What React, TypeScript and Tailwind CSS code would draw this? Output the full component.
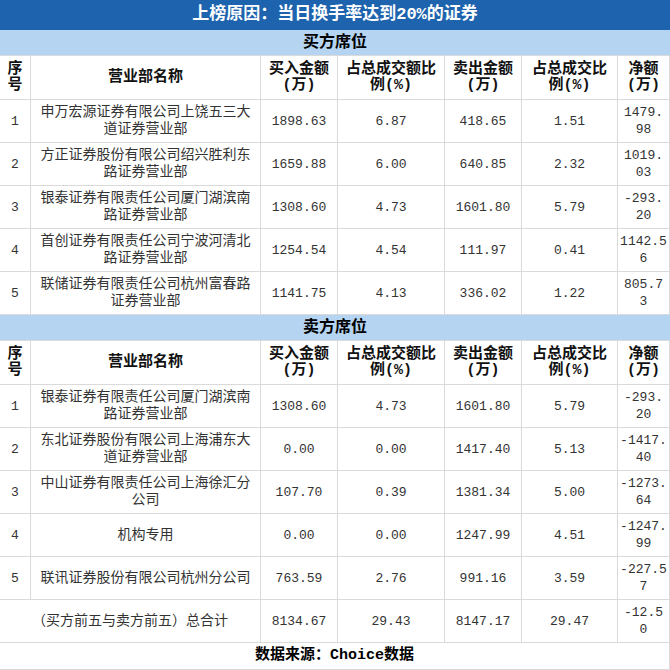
import React from 'react';

type Row = {
  no: string;
  name: string[];
  buy: string;
  buyPct: string;
  sell: string;
  sellPct: string;
  net: string[];
};

const buyRows: Row[] = [
  { no: '1', name: ['申万宏源证券有限公司上饶五三大', '道证券营业部'], buy: '1898.63', buyPct: '6.87', sell: '418.65', sellPct: '1.51', net: ['1479.', '98'] },
  { no: '2', name: ['方正证券股份有限公司绍兴胜利东', '路证券营业部'], buy: '1659.88', buyPct: '6.00', sell: '640.85', sellPct: '2.32', net: ['1019.', '03'] },
  { no: '3', name: ['银泰证券有限责任公司厦门湖滨南', '路证券营业部'], buy: '1308.60', buyPct: '4.73', sell: '1601.80', sellPct: '5.79', net: ['-293.', '20'] },
  { no: '4', name: ['首创证券有限责任公司宁波河清北', '路证券营业部'], buy: '1254.54', buyPct: '4.54', sell: '111.97', sellPct: '0.41', net: ['1142.5', '6'] },
  { no: '5', name: ['联储证券有限责任公司杭州富春路', '证券营业部'], buy: '1141.75', buyPct: '4.13', sell: '336.02', sellPct: '1.22', net: ['805.7', '3'] },
];

const sellRows: Row[] = [
  { no: '1', name: ['银泰证券有限责任公司厦门湖滨南', '路证券营业部'], buy: '1308.60', buyPct: '4.73', sell: '1601.80', sellPct: '5.79', net: ['-293.', '20'] },
  { no: '2', name: ['东北证券股份有限公司上海浦东大', '道证券营业部'], buy: '0.00', buyPct: '0.00', sell: '1417.40', sellPct: '5.13', net: ['-1417.', '40'] },
  { no: '3', name: ['中山证券有限责任公司上海徐汇分', '公司'], buy: '107.70', buyPct: '0.39', sell: '1381.34', sellPct: '5.00', net: ['-1273.', '64'] },
  { no: '4', name: ['机构专用'], buy: '0.00', buyPct: '0.00', sell: '1247.99', sellPct: '4.51', net: ['-1247.', '99'] },
  { no: '5', name: ['联讯证券股份有限公司杭州分公司'], buy: '763.59', buyPct: '2.76', sell: '991.16', sellPct: '3.59', net: ['-227.5', '7'] },
];

const headers: string[][] = [
  ['序', '号'],
  ['营业部名称'],
  ['买入金额', '(万)'],
  ['占总成交额比', '例(%)'],
  ['卖出金额', '(万)'],
  ['占总成交比', '例(%)'],
  ['净额', '(万)'],
];

const grid = 'grid grid-cols-[31px_230px_77px_107px_77px_96px_52px]';

function Cell({ lines, className = '' }: { lines: string[]; className?: string }) {
  return (
    <div className={`flex flex-col items-center justify-center text-center border-r border-b border-[#dadada] ${className}`}>
      {lines.map((l, i) => (
        <span key={i} className="whitespace-nowrap">{l}</span>
      ))}
    </div>
  );
}

function Section({ title, rows }: { title: string; rows: Row[] }) {
  return (
    <>
      <div className="h-[26px] bg-[#b4d4f1] flex items-center justify-center text-[16px] font-bold text-black border-b border-[#dadada]">
        {title}
      </div>
      <div className={`${grid} h-[44px] text-[15px] font-bold leading-[16px] text-[#111]`}>
        {headers.map((h, i) => (
          <Cell key={i} lines={h} />
        ))}
      </div>
      {rows.map(r => (
        <div key={title + r.no} className={`${grid} h-[43px] text-[13px] leading-[17px] text-[#333]`}>
          <Cell lines={[r.no]} />
          <Cell lines={r.name} className="text-[14px]" />
          <Cell lines={[r.buy]} />
          <Cell lines={[r.buyPct]} />
          <Cell lines={[r.sell]} />
          <Cell lines={[r.sellPct]} />
          <Cell lines={r.net} />
        </div>
      ))}
    </>
  );
}

export default function App() {
  return (
    <div className="w-[670px] h-[670px] bg-white font-['Liberation_Mono','Noto_Sans_CJK_SC',monospace] overflow-hidden">
      {/* title */}
      <div className="h-[30px] bg-[#1e63ad] flex items-center justify-center text-white text-[17px] font-bold">
        上榜原因：当日换手率达到20%的证券
      </div>

      <Section title="买方席位" rows={buyRows} />
      <Section title="卖方席位" rows={sellRows} />

      {/* total */}
      <div className={`${grid} h-[43px] text-[13px] leading-[17px] text-[#333]`}>
        <Cell lines={['（买方前五与卖方前五）总合计']} className="col-span-2 text-[14px]" />
        <Cell lines={['8134.67']} />
        <Cell lines={['29.43']} />
        <Cell lines={['8147.17']} />
        <Cell lines={['29.47']} />
        <Cell lines={['-12.5', '0']} />
      </div>

      {/* source */}
      <div className="h-[27px] flex items-center justify-center border-r border-b border-[#dadada] text-[15px] font-bold text-black">
        数据来源：Choice数据
      </div>
    </div>
  );
}
